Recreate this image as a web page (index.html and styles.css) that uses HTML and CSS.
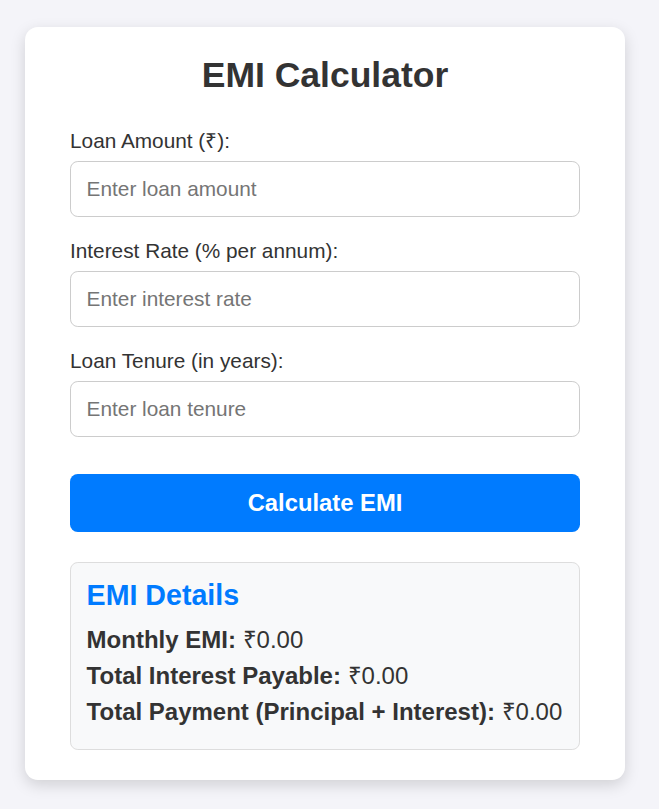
FILE: index.html
```html
<!DOCTYPE html>
<html lang="en">
<head>
<meta charset="UTF-8">
<title>EMI Calculator</title>
<link rel="stylesheet" href="styles.css">
</head>
<body>
<div class="card">
  <h1 class="title">EMI Calculator</h1>
  <div class="group">
    <label class="label" for="amount">Loan Amount (₹):</label>
    <input class="input" id="amount" type="number" placeholder="Enter loan amount">
  </div>
  <div class="group">
    <label class="label" for="rate">Interest Rate (% per annum):</label>
    <input class="input" id="rate" type="number" placeholder="Enter interest rate">
  </div>
  <div class="group">
    <label class="label" for="tenure">Loan Tenure (in years):</label>
    <input class="input" id="tenure" type="number" placeholder="Enter loan tenure">
  </div>
  <button class="btn" type="button">Calculate EMI</button>
  <div class="results">
    <h3 class="results-title">EMI Details</h3>
    <p class="line"><strong>Monthly EMI:</strong> ₹0.00</p>
    <p class="line"><strong>Total Interest Payable:</strong> ₹0.00</p>
    <p class="line"><strong>Total Payment (Principal + Interest):</strong> ₹0.00</p>
  </div>
</div>
</body>
</html>
```
FILE: styles.css
```css
* { box-sizing: border-box; }
html, body { margin: 0; }
body {
  background: #f4f4f9;
  font-family: "Liberation Sans", Arial, sans-serif;
  color: #333;
  padding: 27px 0 0 25px;
  min-height: 809px;
}
.card {
  width: 600px;
  background: #fff;
  border-radius: 13px;
  box-shadow: 0 5px 15px rgba(0, 0, 0, 0.15);
  padding: 28px 45px 30px;
}
.title {
  margin: 0 0 33px;
  text-align: center;
  font-size: 35.5px;
  font-weight: bold;
  color: #333;
  line-height: 1.15;
}
.group { margin-bottom: 21.8px; }
.label {
  display: block;
  font-size: 20.8px;
  line-height: 1.15;
  margin-bottom: 8px;
  color: #333;
}
.input {
  display: block;
  width: 100%;
  height: 56.4px;
  padding: 0 15.6px;
  font-family: inherit;
  font-size: 20.8px;
  color: #333;
  border: 1px solid #ccc;
  border-radius: 7.8px;
  background: #fff;
  outline: none;
}
.input::placeholder { color: #757575; }
.btn {
  display: block;
  width: 100%;
  height: 57.5px;
  margin-top: 37px;
  border: none;
  border-radius: 7.8px;
  background: #007bff;
  color: #fff;
  font-family: inherit;
  font-size: 23.8px;
  font-weight: bold;
  cursor: pointer;
}
.results {
  margin-top: 30.5px;
  background: #f8f9fa;
  border: 1px solid #ddd;
  border-radius: 7.8px;
  padding: 15.6px 15.6px 23px;
}
.results-title {
  margin: 0 0 14.7px;
  font-size: 28.6px;
  font-weight: bold;
  color: #007bff;
  line-height: 1.15;
}
.line {
  margin: 0;
  font-size: 24px;
  line-height: 1.15;
  color: #333;
}
.line + .line { margin-top: 8.4px; }
```
